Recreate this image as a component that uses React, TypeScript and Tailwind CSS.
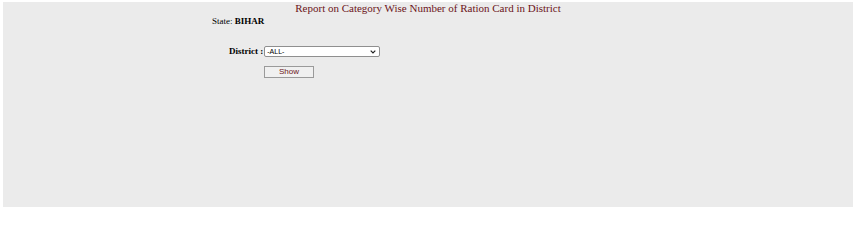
export default function App() {
  return (
    <div className="w-[856px] h-[209px] bg-white pt-[2px] pl-[3px] pr-[3px] pb-[2px]">
      <div className="h-full bg-[#ebebeb] font-['Liberation_Serif',serif]">
        <h1 className="text-center text-[11px] leading-[13px] text-[#6b1420]">
          Report on Category Wise Number of Ration Card in District
        </h1>
        <div className="pl-[209px] text-[9px] leading-[10px] mt-[1px] text-black">
          State: <b>BIHAR</b>
        </div>
        <div className="flex items-center h-[11px] mt-[20px] pl-[226px] gap-[1px]">
          <span className="text-[9px] leading-[11px] font-bold text-black">District :</span>
          <div className="relative w-[116px] h-[11px] bg-white border border-[#8f8f8f] rounded-[2px] flex items-center">
            <span className="pl-[2px] text-[7px] leading-none font-['Liberation_Sans',sans-serif] text-black">-ALL-</span>
            <svg className="absolute right-[3px] top-[3px]" width="6" height="4" viewBox="0 0 6 4">
              <path d="M0.7 0.7 L3 3 L5.3 0.7" stroke="#222" strokeWidth="1.2" fill="none" />
            </svg>
          </div>
        </div>
        <div className="flex pl-[261px] mt-[9px]">
          <button className="w-[50px] h-[12px] bg-[#f0f0f0] border border-[#9a9a9a] text-[8px] leading-none text-[#6b1420] font-['Liberation_Sans',sans-serif]">
            Show
          </button>
        </div>
      </div>
    </div>
  );
}
